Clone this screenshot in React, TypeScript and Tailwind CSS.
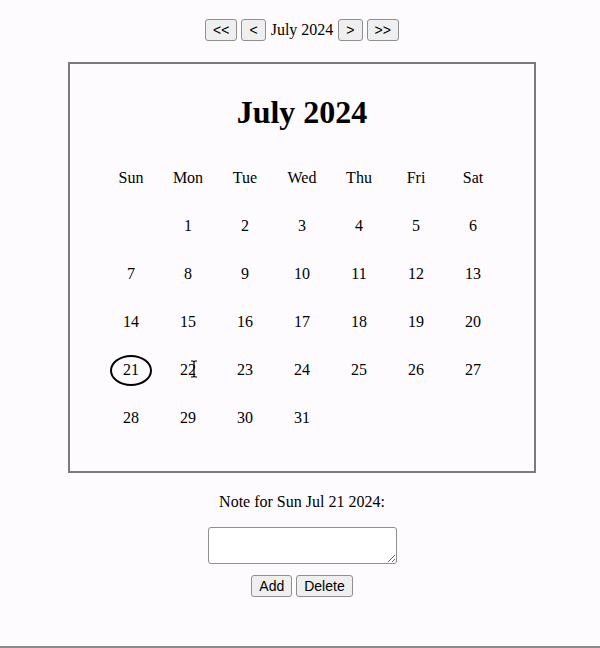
import { useState } from "react";

const days = ["Sun", "Mon", "Tue", "Wed", "Thu", "Fri", "Sat"];

const NavButton = ({ text }: { text: string }) => (
  <button className="h-[22px] px-[7px] bg-[#efefef] border border-[#8f8f8f] rounded-[3px] text-[14px] font-['Liberation_Sans',Arial,sans-serif] text-black leading-none">
    {text}
  </button>
);

export default function App() {
  const [selected] = useState(21);
  const cells: (number | null)[] = [null];
  for (let d = 1; d <= 31; d++) cells.push(d);

  return (
    <div className="h-[648px] w-[600px] pl-[4px] bg-[#fdfbfd] border-b-2 border-[#8c8c8c] flex flex-col items-center font-['Liberation_Serif','Times_New_Roman',serif] text-black text-[16px]">
      <div className="mt-[18px] flex items-center gap-[4px]">
        <NavButton text="<<" />
        <NavButton text="<" />
        <span className="px-[1px]">July 2024</span>
        <NavButton text=">" />
        <NavButton text=">>" />
      </div>

      <div className="mt-[20px] w-[468px] h-[411px] border-2 border-[#7b7b7b] flex flex-col items-center pt-[30px]">
        <h1 className="text-[32px] font-bold leading-[37px]">July 2024</h1>
        <div className="mt-[23px] grid grid-cols-[repeat(7,57px)] auto-rows-[48px]">
          {days.map((d) => (
            <div key={d} className="flex items-center justify-center">{d}</div>
          ))}
          {cells.map((c, i) => (
            <div key={i} className="relative flex items-center justify-center">
              {c === selected ? (
                <span className="w-[42px] h-[31px] border-2 border-black rounded-[50%] flex items-center justify-center">{c}</span>
              ) : (
                <span>{c}</span>
              )}
              {c === 22 && (
                <svg className="absolute left-[30px] top-[14px]" width="8" height="18" viewBox="0 0 8 18">
                  <path d="M1 1h2l1 1 1-1h2M4 2v14M1 17h2l1-1 1 1h2" fill="none" stroke="#000" strokeWidth="1.2" />
                </svg>
              )}
            </div>
          ))}
        </div>
      </div>

      <p className="mt-[20px] leading-[18px]">Note for Sun Jul 21 2024:</p>
      <textarea className="mt-[16px] w-[189px] h-[37px] bg-white border border-[#8f8f8f] rounded-[3px]" />
      <div className="mt-[11px] flex gap-[4px]">
        <NavButton text="Add" />
        <NavButton text="Delete" />
      </div>
    </div>
  );
}
